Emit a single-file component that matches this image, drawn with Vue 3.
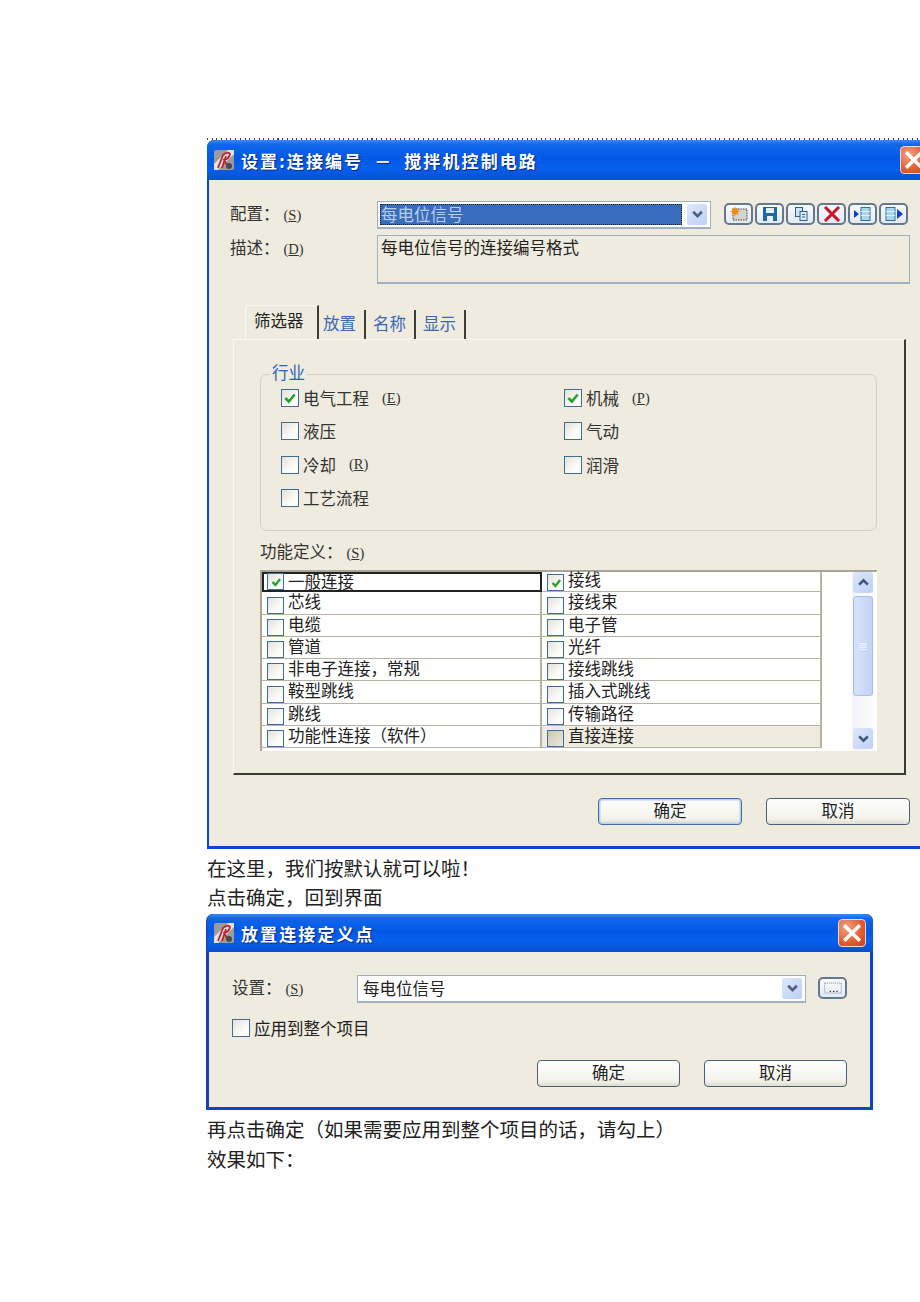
<script setup>
const leftRows = ['一般连接', '芯线', '电缆', '管道', '非电子连接，常规', '鞍型跳线', '跳线', '功能性连接（软件）']
const rightRows = ['接线', '接线束', '电子管', '光纤', '接线跳线', '插入式跳线', '传输路径', '直接连接']
const industries = [
  { name: '电气工程', key: 'E', on: true },
  { name: '机械', key: 'P', on: true },
  { name: '液压' },
  { name: '气动' },
  { name: '冷却', key: 'R' },
  { name: '润滑' },
  { name: '工艺流程' },
]
const tabs = ['放置', '名称', '显示']
</script>

<template>
  <div class="page">
    <div class="dots"></div>
    <section class="dialog first">
      <header class="title">
        <svg class="logo" viewBox="0 0 22 22">
          <rect x="1" y="1" width="20" height="20" rx="2" fill="#9c9a9c" />
          <path d="M1 15 L15 1 H21 V5 L5 21 H1Z" fill="#e6e2e0" />
          <path d="M5 19 L10 6 Q15 2 17 5 Q16 10 11 11 L15 18 M9 19 L13 7" fill="none" stroke="#b8242c" stroke-width="1.800" />
          <circle cx="16" cy="17" r="3" fill="#4a4a48" />
        </svg>
        <span class="title-text">设置:连接编号 － 搅拌机控制电路</span>
        <span class="close first-close">
          <svg viewBox="0 0 20 20"><path d="M4 4 L16 16 M16 4 L4 16" stroke="#fff" stroke-width="3.2" stroke-linecap="square" /></svg>
        </span>
      </header>

      <div class="body first-body">
        <div class="form-row">
          <label class="form-label">配置：<span class="key">(<u>S</u>)</span></label>
          <div class="combo selected">
            <span class="combo-text"><span>每电位信号</span></span>
            <span class="drop">
              <svg viewBox="0 0 12 10"><path d="M2 2.5 L6 6.5 L10 2.5" fill="none" stroke="#4d6185" stroke-width="2.4" /></svg>
            </span>
          </div>
          <div class="toolbar">
            <button class="tool">
              <svg viewBox="0 0 20 16">
                <rect x="4" y="3" width="14" height="11" fill="#d4d4d0" stroke="#444" stroke-width="1" stroke-dasharray="1.500 1" />
                <path d="M6 0.500 L7 3 L9.500 2 L8.500 4.500 L11 5.500 L8.500 6.500 L9.500 9 L7 8 L6 10.500 L5 8 L2.500 9 L3.500 6.500 L1 5.500 L3.500 4.500 L2.500 2 L5 3Z" fill="#f08a12" />
              </svg>
            </button>
            <button class="tool">
              <svg viewBox="0 0 20 16">
                <path d="M3 1 H17 V15 H3Z" fill="#1a6aa8" />
                <rect x="6" y="2" width="8" height="5" fill="#e6eef6" />
                <rect x="7" y="10" width="6" height="5" fill="#e6eef6" />
              </svg>
            </button>
            <button class="tool">
              <svg viewBox="0 0 20 16">
                <rect x="4.500" y="1.500" width="7" height="9" fill="#cfe2f0" stroke="#2b5f8f" />
                <rect x="9" y="5.500" width="7" height="9" fill="#dcebf5" stroke="#2b5f8f" />
                <path d="M11 8.500 H14 M11 11 H14" stroke="#2b5f8f" />
              </svg>
            </button>
            <button class="tool">
              <svg viewBox="0 0 20 16"><path d="M3 1 L17 15 M17 1 L3 15" stroke="#c8142e" stroke-width="3" /></svg>
            </button>
            <button class="tool">
              <svg viewBox="0 0 20 16">
                <path d="M1 4 L6 8 L1 12Z" fill="#0f3fd0" />
                <rect x="8" y="1.500" width="9" height="13" fill="#a9d6ea" stroke="#2b6f9f" />
                <path d="M8 5.500 H17 M8 9.500 H17" stroke="#e3f2f8" stroke-width="1" />
              </svg>
            </button>
            <button class="tool">
              <svg viewBox="0 0 20 16">
                <rect x="2" y="1.500" width="9" height="13" fill="#a9d6ea" stroke="#2b6f9f" />
                <path d="M2 5.500 H11 M2 9.500 H11" stroke="#e3f2f8" stroke-width="1" />
                <path d="M13 3 L19 8 L13 13Z" fill="#0f3fd0" />
              </svg>
            </button>
          </div>
        </div>

        <div class="form-row desc-row">
          <label class="form-label">描述：<span class="key">(<u>D</u>)</span></label>
          <div class="desc">每电位信号的连接编号格式</div>
        </div>

        <div class="tabs">
          <span class="tab active">筛选器</span>
          <span v-for="tab in tabs" :key="tab" class="tab">{{ tab }}</span>
        </div>

        <div class="panel">
          <fieldset class="group">
            <span class="legend">行业</span>
            <div class="industry-grid">
              <label v-for="item in industries" :key="item.name" class="industry">
                <span class="check large" :class="{ on: item.on }">
                  <svg v-if="item.on" viewBox="0 0 12 12"><path d="M2 6 L5 9 L10 3" fill="none" stroke="#22a32e" stroke-width="2.2" /></svg>
                </span>
                {{ item.name }}
                <span v-if="item.key" class="key item-key">(<u>{{ item.key }}</u>)</span>
              </label>
            </div>
          </fieldset>

          <div class="func-label">功能定义：<span class="key">(<u>S</u>)</span></div>

          <div class="list">
            <div class="list-col">
              <div v-for="(row, i) in leftRows" :key="row" class="list-row" :class="{ focus: i === 0 }">
                <span class="check small" :class="{ on: i === 0 }">
                  <svg v-if="i === 0" viewBox="0 0 12 12"><path d="M3 6 L5.500 8.500 L9.500 3.500" fill="none" stroke="#22a32e" stroke-width="2" /></svg>
                </span>
                <span class="row-text">{{ row }}</span>
              </div>
            </div>
            <div class="list-col">
              <div v-for="(row, i) in rightRows" :key="row" class="list-row" :class="{ beige: i === 7 }">
                <span class="check small" :class="{ on: i === 0, off: i === 7 }">
                  <svg v-if="i === 0" viewBox="0 0 12 12"><path d="M3 6 L5.500 8.500 L9.500 3.500" fill="none" stroke="#22a32e" stroke-width="2" /></svg>
                </span>
                <span class="row-text">{{ row }}</span>
              </div>
            </div>
            <div class="scrollbar">
              <span class="scroll-btn">
                <svg viewBox="0 0 12 10"><path d="M2 7 L6 3 L10 7" fill="none" stroke="#3f5680" stroke-width="2.4" /></svg>
              </span>
              <span class="thumb"><i></i><i></i><i></i><i></i></span>
              <span class="scroll-btn down">
                <svg viewBox="0 0 12 10"><path d="M2 3 L6 7 L10 3" fill="none" stroke="#3f5680" stroke-width="2.4" /></svg>
              </span>
            </div>
          </div>
        </div>

        <div class="actions first-actions">
          <button class="btn default">确定</button>
          <button class="btn">取消</button>
        </div>
      </div>
    </section>

    <div class="para para-a">
      <p>在这里，我们按默认就可以啦！</p>
      <p>点击确定，回到界面</p>
    </div>

    <section class="dialog second">
      <header class="title short">
        <svg class="logo" viewBox="0 0 22 22">
          <rect x="1" y="1" width="20" height="20" rx="2" fill="#9c9a9c" />
          <path d="M1 15 L15 1 H21 V5 L5 21 H1Z" fill="#e6e2e0" />
          <path d="M5 19 L10 6 Q15 2 17 5 Q16 10 11 11 L15 18 M9 19 L13 7" fill="none" stroke="#b8242c" stroke-width="1.800" />
          <circle cx="16" cy="17" r="3" fill="#4a4a48" />
        </svg>
        <span class="title-text">放置连接定义点</span>
        <span class="close">
          <svg viewBox="0 0 20 20"><path d="M4 4 L16 16 M16 4 L4 16" stroke="#fff" stroke-width="3.2" stroke-linecap="square" /></svg>
        </span>
      </header>
      <div class="body second-body">
        <div class="form-row">
          <label class="form-label short-label">设置：<span class="key">(<u>S</u>)</span></label>
          <div class="combo wide">
            <span class="combo-text plain">每电位信号</span>
            <span class="drop">
              <svg viewBox="0 0 12 10"><path d="M2 2.5 L6 6.5 L10 2.5" fill="none" stroke="#4d6185" stroke-width="2.4" /></svg>
            </span>
          </div>
          <button class="tool browse">
            <svg viewBox="0 0 24 16">
              <rect x="2" y="2" width="20" height="12" fill="none" stroke="#7a8ea8" stroke-dasharray="1.500 1" />
              <path d="M8 12 h1.500 M12 12 h1.500 M16 12 h1.500" stroke="#222" stroke-width="1.500" />
            </svg>
          </button>
        </div>
        <label class="apply">
          <span class="check large"></span>
          应用到整个项目
        </label>
        <div class="actions second-actions">
          <button class="btn">确定</button>
          <button class="btn">取消</button>
        </div>
      </div>
    </section>

    <div class="para para-b">
      <p>再点击确定（如果需要应用到整个项目的话，请勾上）</p>
      <p>效果如下：</p>
    </div>
  </div>
</template>

<style>
html,
body {
  margin: 0;
  background: #fff;
}
</style>

<style scoped>
.page {
  width: 920px;
  height: 1302px;
  box-sizing: border-box;
  padding: 138px 0 0 207px;
  overflow: hidden;
  background: #fff;
  font-family: "Noto Sans CJK SC", "Noto Sans", sans-serif;
  color: #222;
}

.dots {
  width: 730px;
  height: 2px;
  background: repeating-linear-gradient(90deg, #444 0 1px, #fff 1px 4.700px);
}

.dialog {
  box-sizing: border-box;
  background: #0a46c8;
  border-radius: 7px 7px 0 0;
}

.first {
  width: 730px;
  height: 709px;
  padding-bottom: 3px;
}

.second {
  width: 666px;
  height: 196px;
  margin-top: 3px;
  padding-bottom: 3px;
  box-shadow: -1px 0 0 #1c3f8c;
}

.title {
  display: flex;
  align-items: center;
  height: 40px;
  padding-left: 6px;
  border-radius: 7px 7px 0 0;
  background: linear-gradient(#3a8cf2 0, #0f66ea 12%, #0358e4 45%, #0560ee 70%, #0a4ed0 100%);
}

.title.short {
  height: 38px;
}

.logo {
  width: 22px;
  height: 22px;
  flex: none;
}

.title-text {
  margin-left: 6px;
  color: #fff;
  font-size: 17px;
  font-weight: 700;
  letter-spacing: 2.100px;
  word-spacing: 5px;
  text-shadow: 1px 1px 1px #0a2a80;
}

.close {
  display: flex;
  align-items: center;
  justify-content: center;
  width: 28px;
  height: 28px;
  margin-left: auto;
  margin-right: 7px;
  box-sizing: border-box;
  border: 1px solid #f3d9cf;
  border-radius: 4px;
  background: radial-gradient(circle at 30% 30%, #f0a283, #df5c2e 60%, #c9401a);
}

.close svg {
  width: 22px;
  height: 22px;
}

.first-close {
  margin-right: 9px;
}

.body {
  box-sizing: border-box;
  margin: 0 3px 0 2px;
  background: #efebde;
}

.first-body {
  height: 666px;
  padding: 21px 0 0 21px;
}

.second-body {
  height: 155px;
  padding: 23px 0 0 23px;
}

.form-row {
  display: flex;
  align-items: flex-start;
}

.form-label {
  flex: none;
  width: 147px;
  font-size: 16.500px;
  line-height: 24px;
  color: #333;
}

.short-label {
  width: 125px;
}

.key {
  margin-left: 4px;
  font-size: 14.500px;
  font-family: "Liberation Serif", serif;
}

.combo {
  display: flex;
  align-items: center;
  box-sizing: border-box;
  width: 334px;
  height: 28px;
  padding: 2px 3px 2px 2px;
  border: 1px solid #9eb0c2;
  border-bottom-width: 2px;
  background: #fff;
}

.combo.wide {
  width: 449px;
}

.combo-text {
  flex: 1;
  align-self: stretch;
  display: flex;
  align-items: center;
  padding-left: 1px;
  font-size: 16.500px;
  line-height: 1;
}

.selected .combo-text {
  background: #3a6cbc;
  outline: 1px dotted #222;
  outline-offset: -1px;
  color: #b9cdee;
  margin-right: 5px;
}

.combo-text.plain {
  padding-left: 3px;
  color: #222;
}

.drop {
  display: flex;
  align-items: center;
  justify-content: center;
  flex: none;
  width: 20px;
  height: 21px;
  border-radius: 2px;
  background: linear-gradient(135deg, #dfe8fb, #bccff4);
}

.drop svg {
  width: 13px;
  height: 11px;
}

.toolbar {
  display: flex;
  gap: 2px;
  margin: 2px 0 0 13px;
}

.tool {
  display: flex;
  align-items: center;
  justify-content: center;
  box-sizing: border-box;
  width: 29px;
  height: 22px;
  padding: 0;
  border: 2px solid #64798f;
  border-radius: 5px;
  background: linear-gradient(#f8fafc, #e3eaf0);
}

.tool svg {
  width: 20px;
  height: 16px;
}

.browse {
  margin: 2px 0 0 12px;
}

.desc-row {
  margin-top: 6px;
}

.desc {
  box-sizing: border-box;
  width: 533px;
  height: 49px;
  padding: 0 3px;
  border: 1px solid #9eb0c2;
  border-bottom-width: 2px;
  font-size: 16.500px;
  line-height: 22px;
  color: #222;
}

.tabs {
  display: flex;
  align-items: flex-end;
  height: 34px;
  margin: 21px 0 0 15px;
}

.tab {
  box-sizing: border-box;
  width: 46px;
  height: 29px;
  margin-right: 4px;
  padding-left: 3px;
  border-right: 2px solid #3d3d38;
  color: #3c68b4;
  font-size: 16.500px;
  line-height: 27px;
  white-space: nowrap;
}

.tab.active {
  width: 74px;
  height: 34px;
  margin-right: 1px;
  padding-left: 8px;
  border-top: 1px solid #f9f8f3;
  border-left: 1px solid #f9f8f3;
  border-radius: 3px 0 0 0;
  color: #222;
  line-height: 28px;
  font-size: 16.500px;
}

.panel {
  box-sizing: border-box;
  width: 673px;
  height: 436px;
  margin-left: 3px;
  padding: 34px 0 0 26px;
  border-top: 1px solid #faf9f4;
  border-left: 1px solid #faf9f4;
  border-right: 2px solid #3a3a34;
  border-bottom: 2px solid #3a3a34;
}

.group {
  position: relative;
  box-sizing: border-box;
  width: 617px;
  height: 157px;
  margin: 0;
  padding: 14px 0 0 20px;
  border: 1px solid #d3d0bf;
  border-radius: 7px;
}

.legend {
  position: absolute;
  top: -14px;
  left: 9px;
  padding: 0 2px;
  background: #efebde;
  color: #2a62c0;
  font-size: 16.500px;
  line-height: 22px;
}

.industry-grid {
  display: grid;
  grid-template-columns: 283px 1fr;
  row-gap: 15.300px;
}

.industry {
  display: flex;
  align-items: center;
  gap: 4px;
  height: 18px;
  font-size: 16.500px;
  color: #333;
}

.item-key {
  margin-left: 9px;
}

.check {
  display: flex;
  align-items: center;
  justify-content: center;
  flex: none;
  box-sizing: border-box;
  border: 1.500px solid #3f6d99;
  background: linear-gradient(135deg, #e4e2d6, #fdfdfb 70%);
}

.check.large {
  width: 18px;
  height: 18px;
}

.check.small {
  width: 17px;
  height: 17px;
}

.check.off {
  background: linear-gradient(135deg, #c9c6b6, #ece9db);
}

.check svg {
  width: 14px;
  height: 14px;
}

.func-label {
  height: 20px;
  margin-top: 10px;
  font-size: 16.500px;
  line-height: 20px;
  color: #333;
}

.list {
  display: flex;
  box-sizing: border-box;
  width: 617px;
  height: 181px;
  margin-top: 9px;
  border-top: 2px solid #a8a698;
  border-left: 2px solid #a8a698;
  background: #fff;
}

.list-col {
  width: 280px;
  flex: none;
}

.list-row {
  display: flex;
  align-items: flex-end;
  box-sizing: border-box;
  height: 22.250px;
  padding-left: 5px;
  border-bottom: 1px solid #b5b3a3;
  border-right: 2px solid #b5b3a3;
}

.list-col:first-child .list-row:first-child {
  height: 20.250px;
}

.list-col:nth-child(2) .list-row:first-child {
  height: 20.250px;
}

.list-row.focus {
  border: 2px solid #222;
  padding-left: 3px;
}

.list-row.beige {
  background: #efebde;
}

.row-text {
  align-self: flex-start;
  margin: 0 0 0 4px;
  font-size: 16.500px;
  line-height: 18px;
  white-space: nowrap;
  color: #222;
}

.list-row.focus .row-text,
.list-col:nth-child(2) .list-row:first-child .row-text {
  margin-top: -2px;
}

.scrollbar {
  display: flex;
  flex-direction: column;
  box-sizing: border-box;
  width: 23px;
  height: 179px;
  margin-left: 30px;
  padding-bottom: 2px;
  background: linear-gradient(90deg, #f3f4f8, #fdfdfe);
}

.scroll-btn {
  display: flex;
  align-items: center;
  justify-content: center;
  flex: none;
  width: 20px;
  height: 21px;
  margin-left: 1px;
  border-radius: 3px;
  background: linear-gradient(135deg, #dfe8fb, #bccff4);
}

.scroll-btn svg {
  width: 13px;
  height: 11px;
}

.scroll-btn.down {
  margin-top: auto;
}

.thumb {
  display: flex;
  flex-direction: column;
  align-items: center;
  justify-content: center;
  gap: 1px;
  box-sizing: border-box;
  width: 20px;
  height: 100px;
  margin: 3px 0 0 1px;
  border: 1px solid #a9bfe6;
  border-radius: 3px;
  background: linear-gradient(90deg, #d6e2f9, #c3d4f5);
}

.thumb i {
  display: block;
  width: 8px;
  height: 1px;
  background: #eaf0fc;
}

.actions {
  display: flex;
  gap: 24px;
}

.first-actions {
  margin: 23px 0 0 368px;
}

.second-actions {
  margin: 23px 0 0 305px;
}

.second-actions .btn {
  width: 143px;
}

.btn {
  box-sizing: border-box;
  width: 144px;
  height: 27px;
  padding: 0 0 3px;
  border: 1.500px solid #4a6078;
  border-radius: 4px;
  background: linear-gradient(#ffffff, #f3f2ea 80%, #dfdccf);
  font-family: inherit;
  font-size: 16.500px;
  line-height: 20px;
  color: #222;
}

.btn.default {
  border-color: #3f6ea8;
  box-shadow: inset 0 0 0 1.500px #b9d0ee;
}

.apply {
  display: flex;
  align-items: center;
  gap: 4px;
  height: 18px;
  margin-top: 16px;
  font-size: 16.500px;
  color: #222;
}

.para p {
  margin: 0;
  font-size: 19.500px;
  line-height: 29px;
  color: #222;
}

.para-a {
  margin-top: 4px;
}

.para-b {
  margin-top: 4px;
}

.para-b p {
  line-height: 30px;
}
</style>
